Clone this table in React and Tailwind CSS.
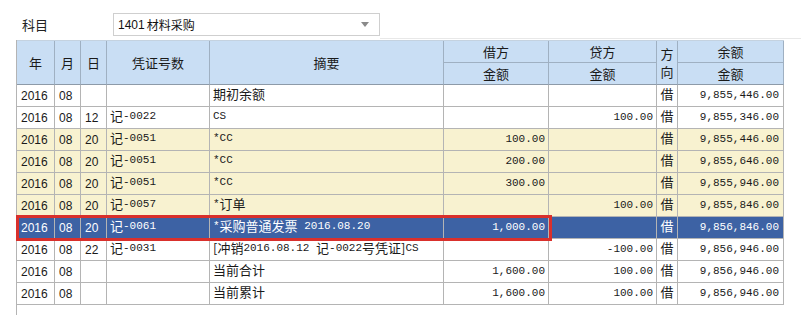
import React from "react";

const GRID = "grid grid-cols-[38px_26px_26px_103px_234px_105px_108px_21px_106px]";
const CJK = "font-['Noto_Sans_CJK_SC',sans-serif] text-[13px]";
const MONO = "font-['Liberation_Mono','Noto_Sans_CJK_SC',monospace] text-[11px]";
const SANS = "font-['Liberation_Sans','Noto_Sans_CJK_SC',sans-serif] text-[12px]";

function Mixed({ text }) {
  const parts = text.split(/([\u3000-\u9fff\uff00-\uffef\[\]]+)/).filter((p) => p !== "");
  return (
    <>
      {parts.map((p, i) =>
        /[\u3000-\u9fff\uff00-\uffef]/.test(p) ? (
          <span key={i} className={CJK}>{p}</span>
        ) : (
          <span key={i} className={MONO + " whitespace-pre"}>{p}</span>
        )
      )}
    </>
  );
}

const rows = [
  { y: "2016", m: "08", d: "", v: "", s: "期初余额", dr: "", cr: "", dir: "借", bal: "9,855,446.00", t: "w" },
  { y: "2016", m: "08", d: "12", v: "记-0022", s: "CS", dr: "", cr: "100.00", dir: "借", bal: "9,855,346.00", t: "w" },
  { y: "2016", m: "08", d: "20", v: "记-0051", s: "*CC", dr: "100.00", cr: "", dir: "借", bal: "9,855,446.00", t: "y" },
  { y: "2016", m: "08", d: "20", v: "记-0051", s: "*CC", dr: "200.00", cr: "", dir: "借", bal: "9,855,646.00", t: "y" },
  { y: "2016", m: "08", d: "20", v: "记-0051", s: "*CC", dr: "300.00", cr: "", dir: "借", bal: "9,855,946.00", t: "y" },
  { y: "2016", m: "08", d: "20", v: "记-0057", s: "*订单", dr: "", cr: "100.00", dir: "借", bal: "9,855,846.00", t: "y" },
  { y: "2016", m: "08", d: "20", v: "记-0061", s: "*采购普通发票 2016.08.20", dr: "1,000.00", cr: "", dir: "借", bal: "9,856,846.00", t: "s" },
  { y: "2016", m: "08", d: "22", v: "记-0031", s: "[冲销2016.08.12 记-0022号凭证]CS", dr: "", cr: "-100.00", dir: "借", bal: "9,856,946.00", t: "w" },
  { y: "2016", m: "08", d: "", v: "", s: "当前合计", dr: "1,600.00", cr: "100.00", dir: "借", bal: "9,856,946.00", t: "w" },
  { y: "2016", m: "08", d: "", v: "", s: "当前累计", dr: "1,600.00", cr: "100.00", dir: "借", bal: "9,856,946.00", t: "w" },
];

const cellB = "border-r border-b border-[#b4b4b4] h-[22px] flex items-center overflow-hidden whitespace-nowrap";
const hB = "border-r border-b border-[#9fb0c2] flex items-center justify-center " + CJK + " text-[#1a1a1a]";

export default function App() {
  return (
    <div className="w-[801px] h-[315px] bg-white overflow-hidden flex flex-col text-[#1a1a1a]">
      {/* top bar */}
      <div className="h-[40px] flex items-start shrink-0">
        <div className={"mt-[13px] ml-[22px] w-[91px] h-[23px] flex items-center " + CJK + " text-[#222]"}>科目</div>
        <div className="mt-[13px] w-[267px] h-[23px] border border-[#cfcfcf] bg-white flex items-center pl-[4px] pr-[10px]">
          <span className={SANS + " text-[#111]"}>1401 </span>
          <span className="font-['Noto_Sans_CJK_SC',sans-serif] text-[12px] text-[#111] ml-[2px]">材料采购</span>
          <div className="flex-1" />
          <svg width="8" height="5" viewBox="0 0 8 5"><path d="M0 0 H8 L4 5 Z" fill="#8a8a8a" /></svg>
        </div>
        <div className="flex-1 h-[39px] border-b border-[#e8e8e8]" />
      </div>

      <div className="ml-[16px] relative w-[768px] border-l border-[#b4b4b4] shrink-0">
        {/* header */}
        <div className={GRID + " grid-rows-[22px_22px] bg-[#c9def4] border-t border-[#c4d2e0]"}>
          <div className={hB + " row-span-2 border-b-[#8d9aa8]"}>年</div>
          <div className={hB + " row-span-2 border-b-[#8d9aa8]"}>月</div>
          <div className={hB + " row-span-2 border-b-[#8d9aa8]"}>日</div>
          <div className={hB + " row-span-2 border-b-[#8d9aa8]"}>凭证号数</div>
          <div className={hB + " row-span-2 border-b-[#8d9aa8]"}>摘要</div>
          <div className={hB}>借方</div>
          <div className={hB}>贷方</div>
          <div className={hB + " row-span-2 flex-col border-b-[#8d9aa8] leading-[18px]"}>
            <span className="h-[18px]">方</span>
            <span className="h-[18px]">向</span>
          </div>
          <div className={hB}>余额</div>
          <div className={hB + " border-b-[#8d9aa8]"}>金额</div>
          <div className={hB + " border-b-[#8d9aa8]"}>金额</div>
          <div className={hB + " border-b-[#8d9aa8]"}>金额</div>
        </div>

        {/* body */}
        {rows.map((r, i) => {
          const bg = r.t === "y" ? "bg-[#f8f2d0]" : r.t === "s" ? "bg-[#3d62a4]" : "bg-white";
          const fg = r.t === "s" ? "text-white" : "text-[#1a1a1a]";
          return (
            <div key={i} className={GRID + " " + bg + " " + fg}>
              <div className={cellB + " pl-[4px] " + SANS}>{r.y}</div>
              <div className={cellB + " pl-[4px] " + SANS}>{r.m}</div>
              <div className={cellB + " pl-[4px] " + SANS}>{r.d}</div>
              <div className={cellB + " pl-[3px] pb-[3px]"}>{r.v && <Mixed text={r.v} />}</div>
              <div className={cellB + " pl-[3px] pb-[3px]"}><Mixed text={r.s} /></div>
              <div className={cellB + " justify-end pr-[3px] " + MONO}>{r.dr}</div>
              <div className={cellB + " justify-end pr-[3px] " + MONO}>{r.cr}</div>
              <div className={cellB + " justify-center pb-[4px] " + CJK}>{r.dir}</div>
              <div className={cellB + " justify-end pr-[4px] " + MONO}>{r.bal}</div>
            </div>
          );
        })}

        {/* selection highlight */}
        <div className="absolute left-[-1px] top-[175px] w-[536px] h-[26px] border-[3px] border-[#d9302c] pointer-events-none" />
      </div>
      <div className="ml-[16px] flex-1 border-l border-[#b4b4b4]" />
    </div>
  );
}
